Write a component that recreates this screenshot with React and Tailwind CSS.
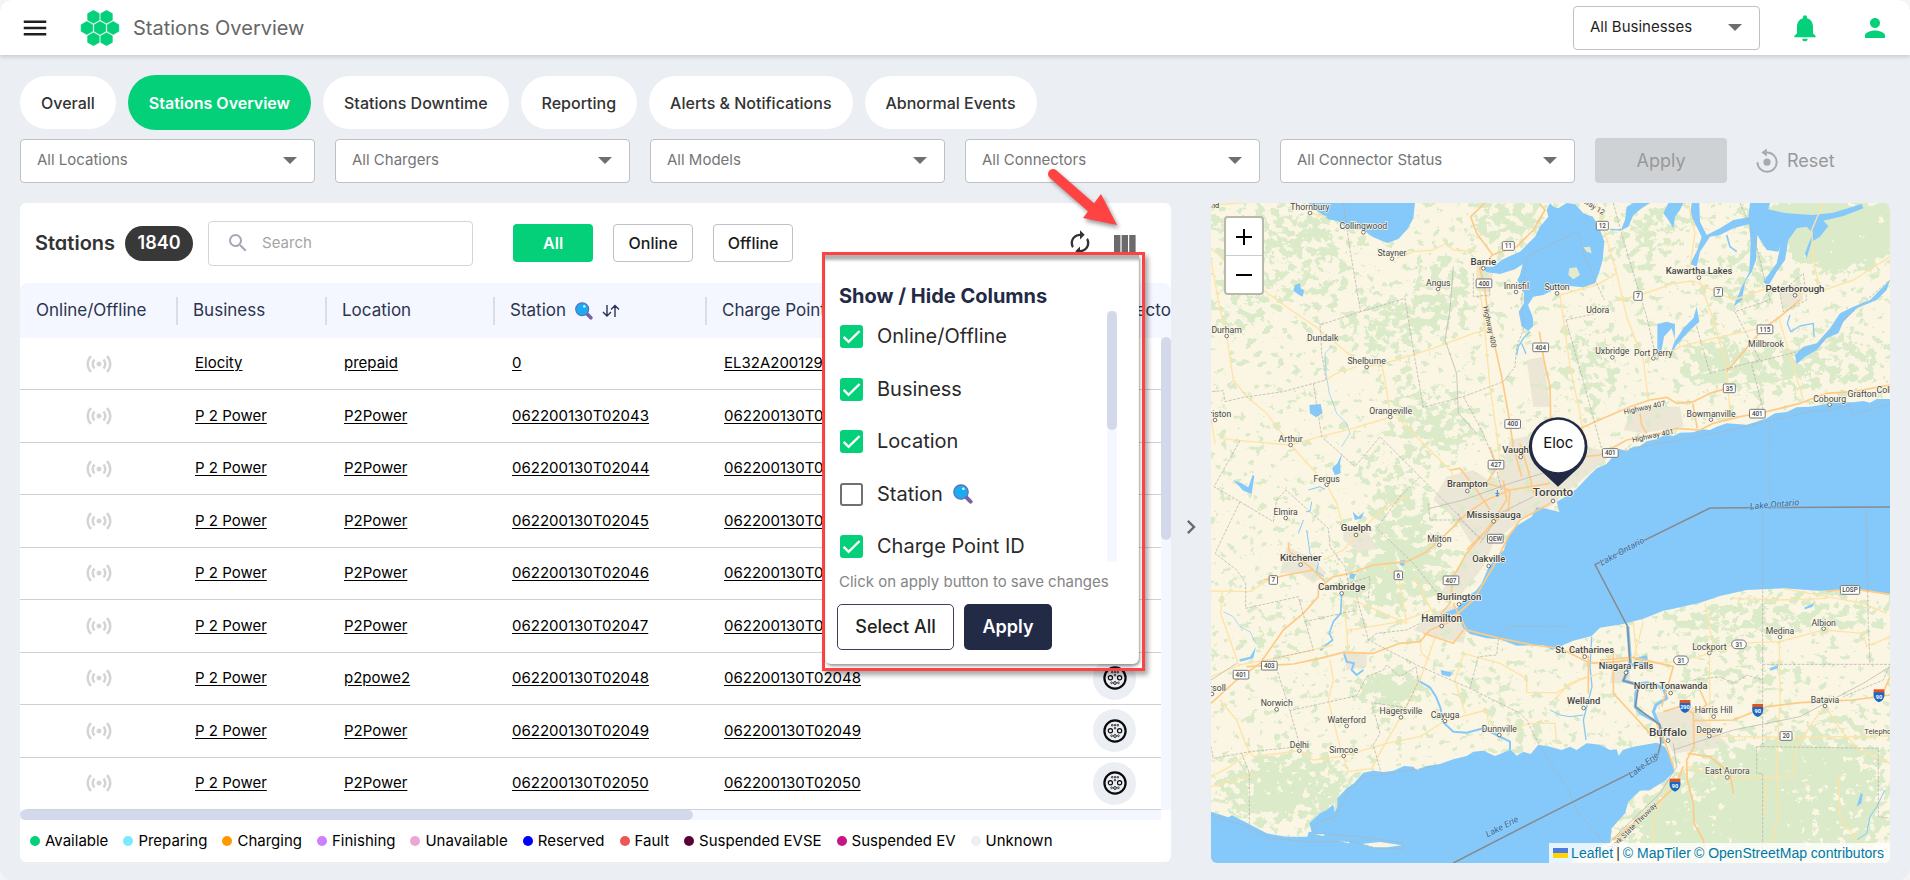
import React from "react";
import {
  MdMenu,
  MdNotifications,
  MdPerson,
  MdAutorenew,
  MdSensors,
  MdSearch,
  MdChevronRight,
} from "react-icons/md";

const TABS = [
  "Overall",
  "Stations Overview",
  "Stations Downtime",
  "Reporting",
  "Alerts & Notifications",
  "Abnormal Events",
];

const FILTERS = [
  "All Locations",
  "All Chargers",
  "All Models",
  "All Connectors",
  "All Connector Status",
];

const ROWS = [
  ["Elocity", "prepaid", "0", "EL32A2001297"],
  ["P 2 Power", "P2Power", "062200130T02043", "062200130T02043"],
  ["P 2 Power", "P2Power", "062200130T02044", "062200130T02044"],
  ["P 2 Power", "P2Power", "062200130T02045", "062200130T02045"],
  ["P 2 Power", "P2Power", "062200130T02046", "062200130T02046"],
  ["P 2 Power", "P2Power", "062200130T02047", "062200130T02047"],
  ["P 2 Power", "p2powe2", "062200130T02048", "062200130T02048"],
  ["P 2 Power", "P2Power", "062200130T02049", "062200130T02049"],
  ["P 2 Power", "P2Power", "062200130T02050", "062200130T02050"],
];

const LEGEND = [
  ["Available", "bg-[#04d079]"],
  ["Preparing", "bg-[#7aebff]"],
  ["Charging", "bg-[#ff9900]"],
  ["Finishing", "bg-[#cc80ff]"],
  ["Unavailable", "bg-[#eda6d3]"],
  ["Reserved", "bg-[#0000ff]"],
  ["Fault", "bg-[#eb5757]"],
  ["Suspended EVSE", "bg-[#5c0038]"],
  ["Suspended EV", "bg-[#c71585]"],
  ["Unknown", "bg-[#ebeef3]"],
];

const COLUMN_TOGGLES = [
  ["Online/Offline", true],
  ["Business", true],
  ["Location", true],
  ["Station", false],
  ["Charge Point ID", true],
];

function HexLogo() {
  const hex = (cx, cy) =>
    `M${cx} ${cy - 6.6}l5.8 3.3v6.6l-5.8 3.3l-5.8-3.3v-6.6z`;
  const centers = [
    [13, 7],
    [26.4, 7],
    [6.3, 18.4],
    [19.7, 18.4],
    [33.1, 18.4],
    [13, 29.8],
    [26.4, 29.8],
  ];
  return (
    <svg viewBox="0 0 39.4 36.8" className="h-9 w-10" aria-hidden="true">
      {centers.map(([x, y]) => (
        <path
          key={`${x}-${y}`}
          d={hex(x, y)}
          fill="#04d079"
          stroke="#04d079"
          strokeWidth="0.8"
          strokeLinejoin="round"
        />
      ))}
    </svg>
  );
}

function Lens({ className }) {
  return (
    <svg viewBox="0 0 20 20" className={className} aria-hidden="true">
      <path d="M12.6 12.6l5 5" stroke="#7763a3" strokeWidth="4" strokeLinecap="round" />
      <circle cx="8" cy="8" r="7.2" fill="#1cabf0" stroke="#5f6bb3" strokeWidth="1.2" />
      <circle cx="10.4" cy="4.8" r="1.3" fill="#fff" />
    </svg>
  );
}

function Caret() {
  return (
    <svg
      viewBox="0 0 14 7"
      className="pointer-events-none col-start-1 row-start-1 mr-[18px] h-[7px] w-[14px] self-center justify-self-end"
      aria-hidden="true"
    >
      <path d="M0 0h14l-7 7z" fill="#6f6f6f" />
    </svg>
  );
}

function Picker({ label, tone }) {
  return (
    <label className="grid h-11 min-w-0">
      <select
        aria-label={label}
        className={`col-start-1 row-start-1 h-full w-full appearance-none rounded border border-[#bfc0c2] bg-white pr-10 pl-4 text-[15px] ${tone}`}
      >
        <option>{label}</option>
      </select>
      <Caret />
    </label>
  );
}

function SocketIcon() {
  return (
    <span className="flex size-[43px] items-center justify-center rounded-full bg-[#ebeef3]">
      <svg viewBox="0 0 24 24" className="size-6" aria-hidden="true" fill="none" stroke="#0a0a0a">
        <circle cx="12" cy="12" r="10.6" strokeWidth="2.2" />
        <circle cx="7.4" cy="11.8" r="2.1" strokeWidth="1.2" />
        <circle cx="16.6" cy="11.8" r="2.1" strokeWidth="1.2" />
        <circle cx="12" cy="17" r="1.4" strokeWidth="0.9" />
        <circle cx="8.6" cy="16.8" r="0.9" strokeWidth="0.7" />
        <circle cx="15.4" cy="16.8" r="0.9" strokeWidth="0.7" />
        <circle cx="9.2" cy="6.2" r="0.8" strokeWidth="0.8" />
        <circle cx="12" cy="6.2" r="0.8" strokeWidth="0.8" />
        <circle cx="14.8" cy="6.2" r="0.8" strokeWidth="0.8" />
        <circle cx="12" cy="9.2" r="0.8" strokeWidth="0.8" />
      </svg>
    </span>
  );
}

function Header() {
  return (
    <header className="flex h-[55px] items-center bg-white pr-5 pl-5 shadow-[0_2px_4px_rgba(0,0,0,0.15)]">
      <button type="button" aria-label="Menu">
        <MdMenu className="size-[30px] text-[#1f1f1f]" />
      </button>
      <a href="#home" aria-label="Home" className="ml-[30px]">
        <HexLogo />
      </a>
      <h1 className="ml-[13px] text-xl text-[#666]">Stations Overview</h1>
      <div className="ml-auto w-[187px]">
        <Picker label="All Businesses" tone="text-[#1f1f1f]" />
      </div>
      <button type="button" aria-label="Notifications" className="ml-[29px]">
        <MdNotifications className="size-8 text-[#04d079]" />
      </button>
      <button type="button" aria-label="Account" className="ml-[39px]">
        <MdPerson className="size-[30px] text-[#04d079]" />
      </button>
    </header>
  );
}

function Tabs() {
  return (
    <nav className="flex h-[55px] items-center gap-3">
      {TABS.map((tab) =>
        tab === "Stations Overview" ? (
          <a
            key={tab}
            href="#stations"
            aria-current="page"
            className="flex h-[55px] items-center rounded-[28px] bg-[#04d079] px-[21px] text-base font-semibold text-white"
          >
            {tab}
          </a>
        ) : (
          <a
            key={tab}
            href="#tab"
            className="flex h-[53px] items-center rounded-[28px] bg-white px-[21px] text-base font-medium text-[#333]"
          >
            {tab}
          </a>
        )
      )}
    </nav>
  );
}

function Filters() {
  return (
    <div className="mt-2 grid grid-cols-[repeat(5,minmax(0,1fr))_132px_143px] items-center gap-5">
      {FILTERS.map((f) => (
        <Picker key={f} label={f} tone="text-[#757575]" />
      ))}
      <button type="button" disabled className="h-[45px] rounded bg-[#ced2d5] text-lg text-[#999]">
        Apply
      </button>
      <button type="button" className="flex items-center gap-2 pl-2 text-lg text-[#999]">
        <svg viewBox="0 0 24 26" className="h-[26px] w-6" aria-hidden="true">
          <path
            d="M2.5 14.2a9.6 9.6 0 1 0 9.6-9.6h-2.4"
            fill="none"
            stroke="#a8abae"
            strokeWidth="2"
          />
          <path d="M6.4 4.4l5.4-4v8z" fill="#a8abae" />
          <circle cx="12" cy="14.2" r="3.6" fill="#a8abae" />
        </svg>
        Reset
      </button>
    </div>
  );
}

function HeadCell({ children, first }) {
  return (
    <th
      scope="col"
      className="bg-[#f4f7ff] p-0 text-left text-[17px] font-normal text-[#2b3450]"
    >
      <div
        className={
          first
            ? "flex h-7 items-center pl-4"
            : "-ml-px flex h-7 items-center gap-[9px] border-l-2 border-[#dadce6] pl-[15px]"
        }
      >
        {children}
      </div>
    </th>
  );
}

function StationsTable() {
  return (
    <div className="grid grid-cols-[minmax(0,1fr)_10px] grid-rows-[auto_10px]">
      <div className="col-span-2 col-start-1 row-start-1 overflow-hidden rounded-lg">
        <table className="h-[527px] w-[1300px] table-fixed border-collapse">
          <colgroup>
            <col className="w-[157px]" />
            <col className="w-[149px]" />
            <col className="w-[168px]" />
            <col className="w-[212px]" />
            <col className="w-[371px]" />
            <col />
          </colgroup>
          <thead>
            <tr className="h-[55px]">
              <HeadCell first>Online/Offline</HeadCell>
              <HeadCell>Business</HeadCell>
              <HeadCell>Location</HeadCell>
              <HeadCell>
                Station
                <Lens className="size-[18px]" />
                <svg viewBox="0 0 18 14" className="h-[14px] w-[18px]" aria-hidden="true">
                  <path
                    d="M5 1v11M1 8l4 4l4-4M13 13V1.6M9 5.4l4-4l4 4"
                    fill="none"
                    stroke="#2b3450"
                    strokeWidth="1.4"
                  />
                </svg>
              </HeadCell>
              <HeadCell>Charge Point ID</HeadCell>
              <HeadCell>Connectors</HeadCell>
            </tr>
          </thead>
          <tbody>
            {ROWS.map((row) => (
              <tr key={row[3]} className="border-b border-[#cfd1da]">
                <td className="p-0">
                  <MdSensors className="mx-auto size-[30px] text-[#d3d4d6]" aria-label="Offline" />
                </td>
                {row.map((cell, i) => (
                  <td key={i} className="p-0 pl-[18px] text-[15px] text-black">
                    <a href="#detail" className="underline underline-offset-2">
                      {cell}
                    </a>
                  </td>
                ))}
                <td className="p-0 pl-4">
                  <SocketIcon />
                </td>
              </tr>
            ))}
          </tbody>
        </table>
      </div>
      <div className="z-10 col-start-2 row-start-1 mt-[54px] bg-[#f4f7ff]">
        <div className="h-[203px] rounded-full bg-[#d3d9ea]" />
      </div>
      <div className="col-start-1 row-start-2 bg-[#f4f7ff]">
        <div className="h-full w-[59%] rounded-full bg-[#d3d9ea]" />
      </div>
    </div>
  );
}

function ColumnsPopup() {
  return (
    <div className="absolute top-[49px] right-[26px] z-20 h-[419px] w-[323px] border-[3px] border-[#ff4343] shadow-[3px_4px_5px_rgba(0,0,0,0.35)]">
      <section className="mr-[3px] flex h-[409px] flex-col rounded-b-md bg-white px-[14px] pt-[27px] shadow-[1px_2px_3px_rgba(0,0,0,0.4),inset_0_6px_3px_-1px_rgba(0,0,0,0.3)]">
        <h2 className="text-xl font-bold text-[#232a46]">Show / Hide Columns</h2>
        <div className="mt-px flex h-[251px] justify-between pr-2">
          <ul>
            {COLUMN_TOGGLES.map(([name, on], i) => (
              <li key={name} className={i % 2 ? "h-[52px]" : "h-[53px]"}>
                <label className="flex h-[50px] items-center gap-[14px] text-xl text-[#2a2a2a]">
                  <span className="grid size-6 place-items-center">
                    <input
                      type="checkbox"
                      defaultChecked={on}
                      className="peer col-start-1 row-start-1 size-[23px] appearance-none rounded-[3px] border-2 border-[#707070] bg-white checked:border-[#04d079] checked:bg-[#04d079]"
                    />
                    <svg
                      viewBox="0 0 23 23"
                      className="pointer-events-none col-start-1 row-start-1 hidden size-[23px] peer-checked:block"
                      aria-hidden="true"
                    >
                      <path
                        d="M3.6 11.8l5 5L19.6 6"
                        fill="none"
                        stroke="#fff"
                        strokeWidth="2.4"
                      />
                    </svg>
                  </span>
                  <span className="flex items-center gap-[10px]">
                    {name}
                    {name === "Station" && <Lens className="size-5" />}
                  </span>
                </label>
              </li>
            ))}
          </ul>
          <div className="w-[10px] bg-[#f4f7ff]">
            <div className="h-[119px] rounded-full bg-[#d3d9ea]" />
          </div>
        </div>
        <p className="mt-[9px] text-[15px] text-[#858585]">Click on apply button to save changes</p>
        <div className="-ml-0.5 mt-[10px] flex gap-[10px]">
          <button
            type="button"
            className="h-[46px] w-[117px] rounded-[5px] border border-[#3a4160] text-lg font-medium text-[#222]"
          >
            Select All
          </button>
          <button
            type="button"
            className="h-[46px] w-[88px] rounded-[5px] bg-[#232a46] text-lg font-semibold text-white"
          >
            Apply
          </button>
        </div>
      </section>
    </div>
  );
}

function PointerArrow() {
  return (
    <svg
      viewBox="0 0 84 70"
      className="absolute -top-[40px] right-[48px] z-20 h-[70px] w-[84px] drop-shadow-[2px_3px_2px_rgba(0,0,0,0.4)]"
      aria-hidden="true"
    >
      <path d="M14 11L54 46" stroke="#ff4343" strokeWidth="10" strokeLinecap="round" />
      <path d="M62 31L44 55L78 62z" fill="#ff4343" />
    </svg>
  );
}

function StationsCard() {
  return (
    <section className="relative min-w-0 rounded-md bg-white">
      <div className="flex h-20 items-center pr-[26px] pl-[15px]">
        <h2 className="text-xl font-semibold text-[#333] [font-feature-settings:'cv11']">Stations</h2>
        <span className="ml-[10px] flex h-[35px] w-[68px] items-center justify-center rounded-full bg-[#383838] text-lg font-semibold text-white">
          1840
        </span>
        <label className="ml-[15px] flex h-[45px] w-[265px] items-center gap-3 rounded border border-[#d3d5d8] px-[17px]">
          <MdSearch className="size-6 shrink-0 text-[#a3a8b4]" />
          <input
            type="search"
            aria-label="Search stations"
            placeholder="Search"
            className="w-full min-w-0 text-[15px] outline-none placeholder:text-[#a5a5a5]"
          />
        </label>
        <div className="ml-10 flex gap-5 text-base font-medium">
          <button type="button" className="h-[38px] w-20 rounded bg-[#04d079] font-semibold text-white">
            All
          </button>
          <button type="button" className="h-[38px] w-20 rounded border border-[#c0c1c4] text-[#1c1c1c]">
            Online
          </button>
          <button type="button" className="h-[38px] w-20 rounded border border-[#c0c1c4] text-[#1c1c1c]">
            Offline
          </button>
        </div>
        <button type="button" aria-label="Refresh" className="ml-auto">
          <MdAutorenew className="size-7 text-[#333]" />
        </button>
        <button type="button" aria-label="Show or hide columns" className="mr-[9px] ml-5">
          <svg viewBox="0 0 22 17" className="h-[17px] w-[22px]" fill="#6b6b6b" aria-hidden="true">
            <rect width="6.4" height="17" />
            <rect x="7.6" width="6.4" height="17" />
            <rect x="15.2" width="6.4" height="17" />
          </svg>
        </button>
      </div>
      <StationsTable />
      <ul className="flex h-[42px] items-center gap-[15px] overflow-hidden pl-[10px] text-[15px] whitespace-nowrap text-black">
        {LEGEND.map(([name, color]) => (
          <li key={name} className="flex items-center gap-[5px]">
            <span className={`size-[10px] rounded-full ${color}`} />
            {name}
          </li>
        ))}
      </ul>
      <PointerArrow />
      <ColumnsPopup />
    </section>
  );
}

/* Map data: [name, x, y, size, dotX, dotY] in the map's own coordinates. */
const PLACES = [
  ["Thornbury", 330, 30, 25, 330, 39],
  ["Collingwood", 490, 88, 25, 490, 97],
  ["Stayner", 576, 167, 25, 576, 176],
  ["Barrie", 850, 194, 28, 850, 205],
  ["Angus", 715, 258, 25, 714, 267],
  ["Innisfil", 949, 266, 25, 948, 276],
  ["Sutton", 1071, 271, 25, 1071, 280],
  ["Durham", 80, 399, 25, 80, 408],
  ["Dundalk", 368, 423, 25, 0, 0],
  ["Shelburne", 500, 492, 25, 500, 501],
  ["Harriston", 40, 651, 25, 45, 660],
  ["Orangeville", 572, 643, 25, 571, 651],
  ["Arthur", 272, 727, 25, 272, 735],
  ["Vaughan", 962, 759, 27, 962, 771],
  ["Fergus", 380, 845, 25, 380, 854],
  ["Brampton", 802, 862, 27, 802, 873],
  ["Toronto", 1059, 888, 34, 1059, 903],
  ["Elmira", 257, 945, 25, 257, 954],
  ["Mississauga", 881, 953, 28, 881, 964],
  ["Guelph", 468, 994, 28, 468, 1005],
  ["Kawartha Lakes", 1497, 222, 27, 1497, 233],
  ["Peterborough", 1785, 275, 28, 1785, 286],
  ["Udora", 1193, 339, 25, 0, 0],
  ["Uxbridge", 1237, 463, 25, 1237, 472],
  ["Port Perry", 1360, 467, 25, 1360, 475],
  ["Millbrook", 1698, 440, 25, 0, 0],
  ["Cobourg", 1889, 605, 25, 1889, 614],
  ["Grafton", 1986, 591, 25, 0, 0],
  ["Colborne", 2082, 579, 25, 0, 0],
  ["Bowmanville", 1533, 650, 25, 1533, 659],
  ["Milton", 718, 1026, 25, 718, 1035],
  ["Oakville", 866, 1086, 27, 866, 1098],
  ["Kitchener", 302, 1083, 28, 302, 1094],
  ["Cambridge", 425, 1169, 28, 425, 1180],
  ["Burlington", 777, 1201, 28, 777, 1213],
  ["Hamilton", 725, 1267, 29, 725, 1278],
  ["Ingersoll", 28, 1472, 25, 36, 1482],
  ["Norwich", 230, 1519, 25, 230, 1528],
  ["Waterford", 440, 1569, 25, 440, 1578],
  ["Hagersville", 603, 1543, 25, 603, 1552],
  ["Cayuga", 735, 1554, 25, 735, 1563],
  ["Dunnville", 898, 1596, 25, 898, 1605],
  ["Delhi", 298, 1643, 25, 298, 1652],
  ["Simcoe", 431, 1660, 25, 431, 1668],
  ["St. Catharines", 1154, 1358, 27, 1154, 1370],
  ["Niagara Falls", 1278, 1407, 27, 1278, 1418],
  ["North Tonawanda", 1412, 1468, 27, 1412, 1479],
  ["Welland", 1151, 1512, 27, 1151, 1524],
  ["Lockport", 1528, 1350, 25, 1528, 1359],
  ["Medina", 1740, 1302, 25, 1740, 1311],
  ["Albion", 1871, 1278, 25, 1871, 1286],
  ["Harris Hill", 1541, 1540, 25, 1541, 1550],
  ["Depew", 1528, 1599, 25, 1528, 1608],
  ["Buffalo", 1404, 1607, 34, 1404, 1622],
  ["Batavia", 1875, 1509, 25, 1875, 1518],
  ["East Aurora", 1582, 1723, 25, 1582, 1732],
  ["Telephone Road", 2075, 1602, 22, 0, 0],
];

const SHIELDS = [
  ["11", 925, 138],
  ["400", 852, 250],
  ["404", 1022, 442],
  ["400", 938, 672],
  ["427", 888, 794],
  ["12", 1207, 77],
  ["7", 1314, 288],
  ["7", 1555, 276],
  ["115", 1695, 388],
  ["35", 1588, 565],
  ["401", 1672, 641],
  ["401", 1231, 759],
  ["QEW", 886, 1016],
  ["407", 753, 1141],
  ["6", 595, 1126],
  ["7", 220, 1140],
  ["403", 208, 1397],
  ["401", 123, 1424],
  ["LOSP", 1950, 1170],
  ["31", 1443, 1381],
  ["31", 1617, 1333],
  ["20", 1758, 1608],
];

const INTERSTATES = [
  ["290", 1455, 1518],
  ["90", 1673, 1530],
  ["90", 2037, 1486],
  ["90", 1425, 1754],
];

const WATER = [
  "M2070 597L2030 597L2010 608L1990 603L1960 607L1920 606L1880 612L1830 620L1790 622L1760 636L1725 640L1700 655L1670 665L1640 674L1580 670L1550 680L1530 690L1505 688L1480 697L1440 698L1420 708L1395 704L1370 718L1340 724L1320 738L1300 740L1280 754L1256 746L1240 768L1220 792L1190 805L1160 835L1130 866L1100 888L1070 905L1078 936L1040 926L1010 922L995 950L970 965L950 977L935 992L925 1005L912 1050L885 1075L862 1110L845 1150L828 1172L800 1190L775 1222L740 1236L712 1252L745 1248L772 1240L790 1285L810 1302L860 1315L900 1318L950 1337L1030 1335L1056 1350L1090 1335L1120 1322L1175 1308L1200 1283L1270 1272L1330 1256L1390 1232L1420 1226L1500 1208L1560 1188L1640 1170L1690 1168L1750 1165L1850 1172L1950 1170L2020 1175L2070 1183Z",
  "M33 1835L85 1852L95 1846L140 1868L200 1900L260 1910L322 1910L326 1896L335 1895L328 1870L360 1840L380 1830L400 1813L404 1838L412 1820L412 1795L440 1765L462 1750L490 1718L520 1712L550 1716L580 1712L612 1698L640 1700L650 1710L680 1698L720 1692L760 1678L800 1668L820 1655L850 1652L885 1668L920 1654L932 1650L950 1667L970 1655L992 1662L1015 1634L1050 1640L1085 1650L1110 1640L1130 1650L1160 1630L1200 1634L1230 1650L1250 1648L1256 1668L1268 1650L1300 1640L1370 1628L1395 1640L1410 1670L1420 1690L1422 1715L1395 1742L1350 1770L1320 1772L1285 1805L1275 1840L1235 1885L1230 1930L1150 1955L1110 1989L33 1989Z",
  "M325 9L335 25L360 38L385 58L415 64L440 85L490 90L520 112L562 129L595 117L622 88L640 55L645 9Z",
  "M1050 9L1040 30L1045 50L1020 80L1005 110L985 130L960 155L930 168L905 180L880 200L852 200L858 216L900 222L945 208L968 193L960 225L952 240L972 280L972 310L956 335L965 380L985 392L1000 378L998 350L984 315L1000 290L1030 285L1060 270L1110 258L1150 262L1185 250L1198 215L1208 180L1213 125L1195 75L1178 50L1150 40L1125 12L1100 9L1075 25L1060 20Z",
  "M1280 20L1300 9L1350 9L1325 25L1300 45L1285 80L1262 92L1275 60Z",
  "M1390 40L1405 9L1450 9L1440 30L1425 50L1420 85L1405 60Z",
  "M1475 9L1498 9L1500 65L1520 105L1560 85L1600 60L1645 52L1650 9L1710 9L1705 28L1760 40L1840 45L1900 38L1985 12L1990 25L1930 48L1870 62L1885 78L1860 110L1835 125L1820 175L1815 160L1838 100L1820 80L1790 85L1765 120L1755 180L1730 215L1705 258L1690 245L1730 190L1742 135L1735 155L1700 150L1672 105L1668 180L1655 215L1635 245L1626 300L1600 320L1625 262L1648 215L1652 130L1648 72L1600 85L1560 105L1530 110L1500 155L1490 200L1470 192L1492 150L1505 110L1480 60L1470 45Z",
  "M1372 372L1400 365L1425 372L1424 425L1450 385L1480 355L1490 320L1498 365L1465 395L1430 435L1408 470L1425 420L1415 385L1392 410L1385 450L1372 485Z",
  "M1785 465L1810 440L1850 430L1890 385L1920 340L1960 320L2010 300L2070 240L2060 270L2030 300L1970 325L1930 365L1915 400L1880 415L1850 450L1815 470L1790 492Z",
  "M285 255L300 250L302 265L312 270L308 290L296 284L280 272Z",
  "M328 615L362 612L368 640L348 652L330 640Z",
  "M427 758L420 790L422 820L405 826L396 805L412 790Z",
  "M100 840L125 850L145 862L158 825L163 828L155 882L130 872Z",
  "M458 935L475 950L492 935L485 955L465 960Z",
  "M600 1082L615 1080L612 1098L600 1095Z",
  "M450 1120L467 1122L462 1138L448 1135Z",
  "M722 1410L758 1418L750 1430L725 1424Z",
  "M1305 1375L1340 1365L1345 1385L1320 1400L1260 1398L1300 1390Z",
  "M1812 1223L1842 1210L1838 1220L1815 1228Z",
  "M1708 1405L1735 1395L1733 1405L1712 1412Z",
  "M1982 1780L1988 1782L1984 1810L1970 1820Z",
  "M118 1378L150 1370L168 1340L160 1375L120 1385Z",
];

const RIVERS = [
  ["M1283 1280L1287 1330L1291 1385L1280 1420L1270 1442L1300 1450L1316 1455L1308 1480L1306 1520L1322 1540L1350 1555L1372 1565L1384 1590L1390 1630", 10],
  ["M1316 1452L1340 1448L1370 1455L1392 1470L1400 1495L1368 1515L1360 1535L1372 1565L1385 1595", 9],
  ["M655 1442L690 1462L708 1490L722 1525L728 1565L760 1595L800 1598L850 1585L890 1605L930 1625L930 1650", 6],
  ["M425 1185L422 1240L400 1265L388 1300L398 1320L360 1350", 5],
  ["M432 1360L440 1385L462 1390L455 1410L470 1425L490 1410", 6],
  ["M1175 1310L1170 1400L1176 1460L1150 1560L1158 1620", 4],
  ["M1770 345L1762 370L1772 395L1800 378L1840 370L1842 410", 4],
  ["M990 395L970 415L955 440L950 465M965 430L978 462", 4],
  ["M335 905L330 935L318 935M325 870L360 860L375 868M310 960L295 1000", 3],
  ["M320 990L330 1060L355 1090L350 1115L372 1130", 3],
  ["M400 435L375 460L378 520L388 580L410 640L440 670L450 700L425 740", 2],
  ["M70 1235L100 1250L120 1280L150 1295L168 1330", 2],
  ["M1050 1530L1080 1545L1110 1550L1150 1545", 3],
  ["M1580 105L1590 140L1610 155", 5],
  ["M1230 88L1262 90", 4],
  ["M2055 1770L2030 1820L2010 1850L2000 1900L1970 1920", 3],
];

const MINOR = [
  "M33 145L100 200L190 270L280 335L350 382L420 440L480 490",
  "M33 180L60 330L80 408L100 540L140 590L200 640L272 735L340 810L380 854L410 910L430 980L468 1005",
  "M470 500L410 520L375 540",
  "M500 501L590 480L700 445L820 400L860 390",
  "M545 490L560 570L572 651",
  "M60 715L120 722L272 735L360 710L460 685L572 651",
  "M33 655L45 730M590 651L680 740L750 810L780 860",
  "M590 175L640 155L700 150L735 132L760 150L830 155",
  "M330 39L380 50M33 15L130 9",
  "M830 210L850 340L870 560L890 700L905 830",
  "M1080 285L1190 255L1250 220M1190 9L1215 100L1250 220L1280 350L1330 480L1345 600",
  "M1250 300L1314 288L1420 250L1480 243L1600 300L1700 265",
  "M1465 9L1485 100L1470 200L1497 235L1540 360L1580 500L1590 640",
  "M1335 480L1400 465L1440 440L1540 415L1680 385",
  "M1870 9L1835 90L1840 180L1858 260L1785 290",
  "M1858 275L1960 240L2070 170M1735 350L1780 500L1810 600",
  "M1080 285L1110 500L1140 640L1150 700",
  "M33 1173L150 1175L205 1140M67 1173L62 1240L118 1400",
  "M370 1080L430 1050L470 1005L540 935L620 890M180 1720L33 1760",
  "M430 1200L440 1290L445 1370M440 1292L600 1265L690 1232",
  "M460 1200L540 1235L620 1270M33 1430L118 1395L250 1370L400 1335",
  "M390 1380L400 1440L385 1500L420 1640L445 1715L515 1705L550 1640L600 1555L660 1440L710 1300",
  "M60 1500L110 1560L140 1640L160 1670L300 1652L340 1680L431 1668L560 1630L660 1610L735 1563L860 1530L870 1600",
  "M33 1730L90 1700L150 1655",
  "M790 1365L765 1440L795 1540M790 1360L900 1390L980 1435L980 1478L1070 1478L1140 1440L1200 1420",
  "M660 1320L665 1360L690 1380M930 1590L990 1570L1065 1570L1070 1630",
  "M1300 1265L1310 1370M1330 1265L1300 1380L1370 1390L1420 1385",
  "M1480 1375L1528 1359L1610 1330L1740 1324L1871 1290L1990 1300L2000 1340L2070 1310",
  "M1528 1365L1530 1600M1738 1324L1740 1500L1730 1700L1735 1850L1700 1989",
  "M1515 1210L1530 1290L1543 1350",
  "M1480 1605L1600 1610L1760 1612L2070 1608",
  "M1470 1700L1580 1735L1780 1730L1790 1640L1850 1550L1875 1518L1930 1600L1980 1650L2070 1690",
  "M1410 1740L1360 1860L1360 1989M1470 1700L1440 1720",
  "M1700 1735L1690 1850M1915 1720L1920 1850L1970 1920L2050 1960",
  "M1600 1195L1740 1200L1880 1195M1750 1166L1990 1210L2060 1240",
  "M1062 1500L1110 1450L1160 1430",
  "M620 1270L595 1126L540 1090M640 1130L700 1240",
];

const MAJOR = [
  "M855 9L812 50L830 100L878 165L838 205L852 250L862 330L885 440L905 530L925 640L940 740L965 830",
  "M875 165L950 140L1000 90L1035 30L1020 12",
  "M1018 395L1032 480L1050 560L1052 660L1045 720L1030 800",
  "M1050 700L1130 690L1220 650L1290 620L1350 600L1400 592L1430 610L1480 605L1530 580L1580 565",
  "M1055 800L1150 770L1200 765L1280 720L1380 700L1430 685L1500 690L1540 670L1620 650L1700 635L1800 610L1880 580L1960 575L2070 555",
  "M1580 515L1610 480L1660 420L1690 385L1740 350L1800 300",
  "M1320 640L1325 675L1340 700M1478 610L1492 685",
  "M33 1510L110 1440L180 1390L215 1340L250 1290L310 1240L355 1190L355 1165L375 1150L400 1130L450 1120L520 1095L620 1085L680 1055L740 1000L800 940L860 900L930 870L1050 850",
  "M140 1400L280 1392L360 1375L430 1357L520 1360L600 1330L660 1325L690 1290L740 1270L820 1200L880 1100L925 1010L960 960L1050 910",
  "M760 1210L785 1260L800 1290L900 1315L1000 1335L1080 1345L1170 1390L1250 1385L1290 1380",
  "M700 1270L750 1210L760 1130L800 1060L860 990L920 900L910 840",
  "M670 1300L760 1330L790 1290",
  "M750 810L780 805L830 870L870 930M870 740L890 800L860 850L930 870",
  "M930 870L925 930L870 980L800 1050M960 730L990 830L1000 880",
  "M190 1140L260 1125L340 1110L375 1145M265 1030L268 1055L310 1085L340 1110",
  "M1240 1350L1240 1480L1300 1545L1350 1600M1110 1345L1165 1370L1165 1480",
  "M1390 1535L1440 1520L1480 1540L1520 1515L1500 1470M1480 1540L1482 1640L1460 1680L1462 1740L1480 1810L1482 1870L1510 1920L1520 1989",
  "M1480 1562L1600 1560L1700 1520L1800 1508L1960 1500L2070 1485M2040 1500L2070 1430",
  "M1450 1700L1425 1760L1350 1830L1240 1920M1462 1660L1530 1670L1590 1720L1600 1780",
  "M1370 1570L1400 1640L1420 1700M1385 1520L1420 1400L1300 1372L1200 1380",
  "M1880 1175L1950 1165L2070 1183",
];

const BORDERS = [
  "M430 9L450 150L482 335L615 295L640 450L670 622L790 590L910 545L945 500L950 440L970 390L965 300L980 170L1080 120L1135 95L1155 175L1213 300",
  "M482 335L360 375L365 460L378 540L250 575L130 592L75 605L70 572L33 575",
  "M340 550L365 710L465 800L540 710L660 830L770 940L840 1020",
  "M790 590L850 700L885 790L905 870M660 830L600 890L530 985L640 1090L720 1190",
  "M120 722L42 860L120 905L220 965L230 900L258 870L385 985L390 1040L435 1100L445 1150L510 1130L505 1200",
  "M120 905L45 1060L110 1110L137 1150L137 1225L295 1190L340 1350L220 1375L270 1532L390 1505L470 1487L500 1430L550 1410L560 1395L600 1430L648 1400L655 1445L618 1523L515 1508L540 1600L520 1635L545 1725",
  "M270 1532L300 1640L150 1655L40 1675L33 1640M125 1660L148 1720L148 1880",
  "M470 1190L505 1320L650 1395L810 1465L960 1540L980 1560L1020 1640L1100 1760L1130 1830L1240 1960",
  "M505 1320L530 1300L620 1290L700 1250M315 1265L470 1230M810 1465L835 1370L890 1365L895 1320",
  "M775 940L780 960L850 1020M685 910L690 960L780 960M820 220L820 290L870 285L865 240",
  "M33 1845L140 1880L210 1915L320 1925L460 1925L530 1945L610 1945L610 1930L480 1910L345 1900L340 1875L410 1845L440 1780L490 1730L545 1725L700 1700",
  "M1240 9L1270 120L1340 350L1370 480M1098 360L1190 340M1098 360L1160 580L1210 765",
  "M1210 765L1350 735L1500 710L1700 665L1850 630L1870 635L1950 615L1960 645L2070 610",
  "M1490 380L1530 520L1680 480L1605 335L1710 300L1700 265L1660 100L1620 9",
  "M1655 490L1850 440L1930 360L2070 240M1655 495L1695 650M1740 280L1810 220L1820 300L1750 335Z",
  "M1708 670L1708 920M1688 925L1688 1640L1670 1640L1670 1720L1688 1720L1688 1989",
  "M1998 925L2005 1280L2010 1390M1688 1393L2070 1393L2050 1440L1930 1490M1688 1640L2035 1645L2035 1850L2070 1855",
  "M1100 1280L920 1278L895 1320M1480 1440L1560 1430L1600 1450L1640 1425L1688 1440",
];

const FOREST = [
  [170, 90, 200, 80, 0.16],
  [420, 80, 130, 60, 0.13],
  [560, 380, 120, 90, 0.2],
  [730, 280, 90, 120, 0.2],
  [920, 60, 110, 70, 0.26],
  [330, 210, 120, 120, 0.13],
  [130, 300, 110, 140, 0.12],
  [620, 560, 60, 60, 0.12],
  [700, 680, 120, 90, 0.24],
  [560, 820, 90, 60, 0.14],
  [600, 980, 100, 120, 0.24],
  [640, 1120, 130, 90, 0.26],
  [500, 1170, 90, 80, 0.22],
  [1310, 130, 100, 110, 0.12],
  [1400, 60, 120, 60, 0.12],
  [1930, 100, 180, 110, 0.46],
  [1760, 60, 140, 80, 0.34],
  [1660, 500, 170, 70, 0.24],
  [1520, 480, 90, 80, 0.2],
  [1170, 500, 100, 120, 0.16],
  [1900, 480, 160, 90, 0.16],
  [1620, 250, 120, 90, 0.16],
  [570, 1470, 95, 55, 0.4],
  [300, 1760, 160, 110, 0.26],
  [150, 1780, 120, 90, 0.2],
  [430, 1100, 60, 60, 0.1],
  [860, 1450, 90, 70, 0.12],
  [960, 1600, 100, 60, 0.14],
  [1560, 1270, 160, 70, 0.18],
  [1850, 1240, 220, 60, 0.18],
  [1640, 1420, 200, 60, 0.12],
  [1560, 1850, 220, 150, 0.32],
  [1820, 1820, 250, 180, 0.3],
  [1650, 1680, 150, 60, 0.26],
  [1900, 1660, 200, 60, 0.2],
  [1340, 1880, 90, 90, 0.22],
  [200, 1300, 90, 70, 0.08],
  [1850, 1560, 200, 40, 0.12],
];

const URBAN = [
  "M930 720L1060 690L1160 740L1240 760L1120 860L1050 920L960 960L880 1030L850 1100L770 1200L720 1180L820 1040L770 960L700 900L740 830L820 810L880 850L910 780Z",
  "M640 1290L700 1240L760 1215L800 1290L790 1330L700 1310Z",
  "M260 1040L330 1070L380 1120L340 1150L300 1120L240 1120Z",
  "M430 970L500 990L530 1040L480 1060L430 1020Z",
  "M430 1350L500 1360L500 1400L440 1410Z",
  "M1300 620L1440 620L1450 680L1330 700L1270 690Z",
  "M1240 1380L1290 1400L1290 1450L1230 1450Z",
  "M1360 1540L1480 1520L1560 1610L1590 1640L1420 1660Z",
  "M1740 260L1800 250L1810 300L1750 330Z",
  "M830 190L880 210L870 280L830 270Z",
  "M980 480L1030 470L1050 620L1000 620Z",
];

function MapDrawing() {
  return (
    <svg
      viewBox="33 9 2037 1980"
      preserveAspectRatio="xMidYMid slice"
      className="col-start-1 row-start-1 h-full w-full"
      role="img"
      aria-label="Map of stations around Toronto"
      fontFamily="Roboto, sans-serif"
    >
      <defs>
        <filter id="woods" x="33" y="9" width="2037" height="1980" filterUnits="userSpaceOnUse" colorInterpolationFilters="sRGB">
          <feGaussianBlur in="SourceGraphic" stdDeviation="28" result="density" />
          <feTurbulence type="fractalNoise" baseFrequency="0.036 0.042" numOctaves="4" seed="11" result="noise" />
          <feComposite in="density" in2="noise" operator="arithmetic" k1="0" k2="1" k3="1" k4="0" />
          <feColorMatrix values="0 0 0 0 0.859  0 0 0 0 0.918  0 0 0 0 0.784  0 0 0 20 -13.1" />
        </filter>
      </defs>
      <rect x="33" y="9" width="2037" height="1980" fill="#faf6e3" />
      {URBAN.map((d) => (
        <path key={d} d={d} fill="#ece6d7" />
      ))}
      <g filter="url(#woods)">
        <rect x="33" y="9" width="2037" height="1980" fill="#000" fillOpacity="0.02" />
        {FOREST.map(([x, y, rx, ry, o]) => (
          <ellipse key={`${x}-${y}`} cx={x} cy={y} rx={rx} ry={ry} fill="#000" fillOpacity={o} />
        ))}
      </g>
      {WATER.map((d) => (
        <path key={d} d={d} fill="#85c9fa" />
      ))}
      <path d="M1108 205L1130 202L1140 225L1120 238L1105 225ZM1150 142L1170 140L1175 160L1160 155Z" fill="#e3ebcc" />
      <path d="M485 1932L540 1926L605 1936L560 1942L520 1942ZM345 1903L375 1902L370 1908ZM415 1922L450 1926L445 1930Z" fill="#faf6e3" />
      <g fill="none" stroke="#85c9fa" strokeLinejoin="round">
        {RIVERS.map(([d, w]) => (
          <path key={d} d={d} strokeWidth={w} />
        ))}
      </g>
      <g fill="none" stroke="#ffe3a6" strokeWidth="4" strokeLinejoin="round">
        {MINOR.map((d) => (
          <path key={d} d={d} />
        ))}
      </g>
      <g fill="none" stroke="#ffca85" strokeWidth="5" strokeLinejoin="round">
        {MAJOR.map((d) => (
          <path key={d} d={d} />
        ))}
      </g>
      <g fill="none" stroke="#b3b0ac" strokeWidth="2.4" strokeDasharray="9 4" opacity="0.9">
        {BORDERS.map((d) => (
          <path key={d} d={d} />
        ))}
      </g>
      <path d="M2070 921L1530 924L1185 1094L1283 1280L1290 1390L1270 1442L1316 1455L1306 1520L1380 1575L1382 1630L1370 1680L1050 1840L760 1989" fill="none" stroke="#868a8e" strokeWidth="4.5" />
      <g fill="none" stroke="#bdbab3" strokeWidth="2.4">
        <path d="M690 925L790 900L930 850L1060 810M840 1030L900 940L1000 890M1420 1650L1600 1590L1800 1550L1990 1450L2070 1400M1225 1930L1380 1780L1430 1700L1420 1630M760 200L750 330L735 420L770 520L775 640L830 700M33 1440L110 1390" />
      </g>
      <g fill="#3a78b0" fontSize="27" fontStyle="italic" fontWeight="500" textAnchor="middle" stroke="#a9d8f8" strokeWidth="3" paintOrder="stroke">
        <text transform="translate(1724 922) rotate(-5)">Lake Ontario</text>
        <text transform="translate(1270 1062) rotate(-29)">Lake Ontario</text>
        <text transform="translate(1336 1702) rotate(-38)">Lake Erie</text>
        <text transform="translate(910 1888) rotate(-27)">Lake Erie</text>
      </g>
      <g fill="#4a4a4a" fontSize="22" textAnchor="middle" stroke="#faf6e3" strokeWidth="3" paintOrder="stroke">
        <text transform="translate(862 382) rotate(78)">Highway 400</text>
        <text transform="translate(1335 630) rotate(-12)">Highway 407</text>
        <text transform="translate(1360 714) rotate(-12)">Highway 401</text>
        <text transform="translate(1305 1884) rotate(-45)">York State Thruway</text>
        <text transform="translate(1160 15) rotate(32)">Highway 12</text>
      </g>
      {PLACES.map(([name, x, y, size, dx, dy]) => (
        <g key={name}>
          {dx > 0 && <circle cx={dx} cy={dy} r="5.5" fill="#fff" stroke="#555" strokeWidth="2.4" />}
          <text
            x={x}
            y={y}
            fontSize={size + 1}
            fontWeight={size > 26 ? 500 : 400}
            textAnchor="middle"
            fill="#454545"
            stroke="#fbf8ea"
            strokeWidth="4"
            paintOrder="stroke"
          >
            {name}
          </text>
        </g>
      ))}
      <text x="33" y="23" fontSize="22" fill="#333">nd</text>
      {SHIELDS.map(([name, x, y]) => {
        const w = 14 + name.length * 11;
        const oval = name === "31";
        return (
          <g key={`${name}-${x}`}>
            <rect
              x={x - w / 2 - (oval ? 4 : 0)}
              y={y - 13}
              width={w + (oval ? 8 : 0)}
              height="26"
              rx={oval ? 13 : 3}
              fill="#fff"
              stroke="#777"
              strokeWidth="3"
            />
            <text x={x} y={y + 7} fontSize="19" fontWeight="500" textAnchor="middle" fill="#444">
              {name}
            </text>
          </g>
        );
      })}
      {INTERSTATES.map(([name, x, y]) => (
        <g key={`${name}-${x}`}>
          <path d={`M${x - 16} ${y - 10}h32c2 14-2 26-16 31c-14-5-18-17-16-31z`} fill="#1d67c4" />
          <path d={`M${x - 16} ${y - 18}h32v9h-32z`} fill="#e2531f" />
          <text x={x} y={y + 10} fontSize="17" fontWeight="700" textAnchor="middle" fill="#fff">
            {name}
          </text>
        </g>
      ))}
      <path d="M886 880h12M892 870v20M888 887h8" stroke="#3a8ad8" strokeWidth="3" />
      <g>
        <path d="M1074 860L1015 805A88 88 0 1 1 1136 803Z" fill="#232a46" />
        <circle cx="1075" cy="738" r="79" fill="#fff" />
        <text x="1075" y="743" fontSize="45" textAnchor="middle" fill="#111" fontFamily="Inter, sans-serif">
          Eloc
        </text>
      </g>
    </svg>
  );
}

function StationsMap() {
  return (
    <section className="grid min-w-0 overflow-hidden rounded-md">
      <MapDrawing />
      <div className="z-10 col-start-1 row-start-1 m-[13px] flex w-10 flex-col self-start justify-self-start overflow-hidden rounded border-2 border-[#b9b8ab] bg-white">
        <button type="button" aria-label="Zoom in" className="flex h-[38px] items-center justify-center border-b border-[#ccc]">
          <svg viewBox="0 0 16 16" className="size-4" aria-hidden="true">
            <path d="M8 0v16M0 8h16" stroke="#000" strokeWidth="2" />
          </svg>
        </button>
        <button type="button" aria-label="Zoom out" className="flex h-[37px] items-center justify-center">
          <svg viewBox="0 0 16 16" className="size-4" aria-hidden="true">
            <path d="M0 8h16" stroke="#000" strokeWidth="2" />
          </svg>
        </button>
      </div>
      <p className="z-10 col-start-1 row-start-1 flex h-5 items-center gap-[3px] self-end justify-self-end bg-white/80 pr-[6px] pl-1 font-['Liberation_Sans',sans-serif] text-sm text-[#333]">
        <svg viewBox="0 0 15 10" className="h-[10px] w-[15px]" aria-hidden="true">
          <path d="M0 0h15v5H0z" fill="#4c7be1" />
          <path d="M0 5h15v5H0z" fill="#ffd500" />
        </svg>
        <a href="#leaflet" className="text-[#0078a8]">Leaflet</a>
        <span>|</span>
        <a href="#maptiler" className="text-[#0078a8]">© MapTiler</a>
        <a href="#osm" className="text-[#0078a8]">© OpenStreetMap contributors</a>
      </p>
    </section>
  );
}

export default function App() {
  return (
    <div className="bg-[#f4f4f4] font-['Inter',sans-serif]">
      <div className="overflow-hidden rounded-xl bg-[#ebeef3] pb-[17px]">
        <Header />
        <main className="px-5 pt-5">
          <Tabs />
          <Filters />
          <div className="mt-5 grid grid-cols-[minmax(0,1151fr)_40px_minmax(0,679fr)]">
            <div>
              <StationsCard />
            </div>
            <button
              type="button"
              aria-label="Collapse map"
              className="flex items-center justify-center pb-3 text-[#6b6b6b]"
            >
              <MdChevronRight className="size-7" />
            </button>
            <div className="grid h-[660px]">
              <StationsMap />
            </div>
          </div>
        </main>
      </div>
    </div>
  );
}
